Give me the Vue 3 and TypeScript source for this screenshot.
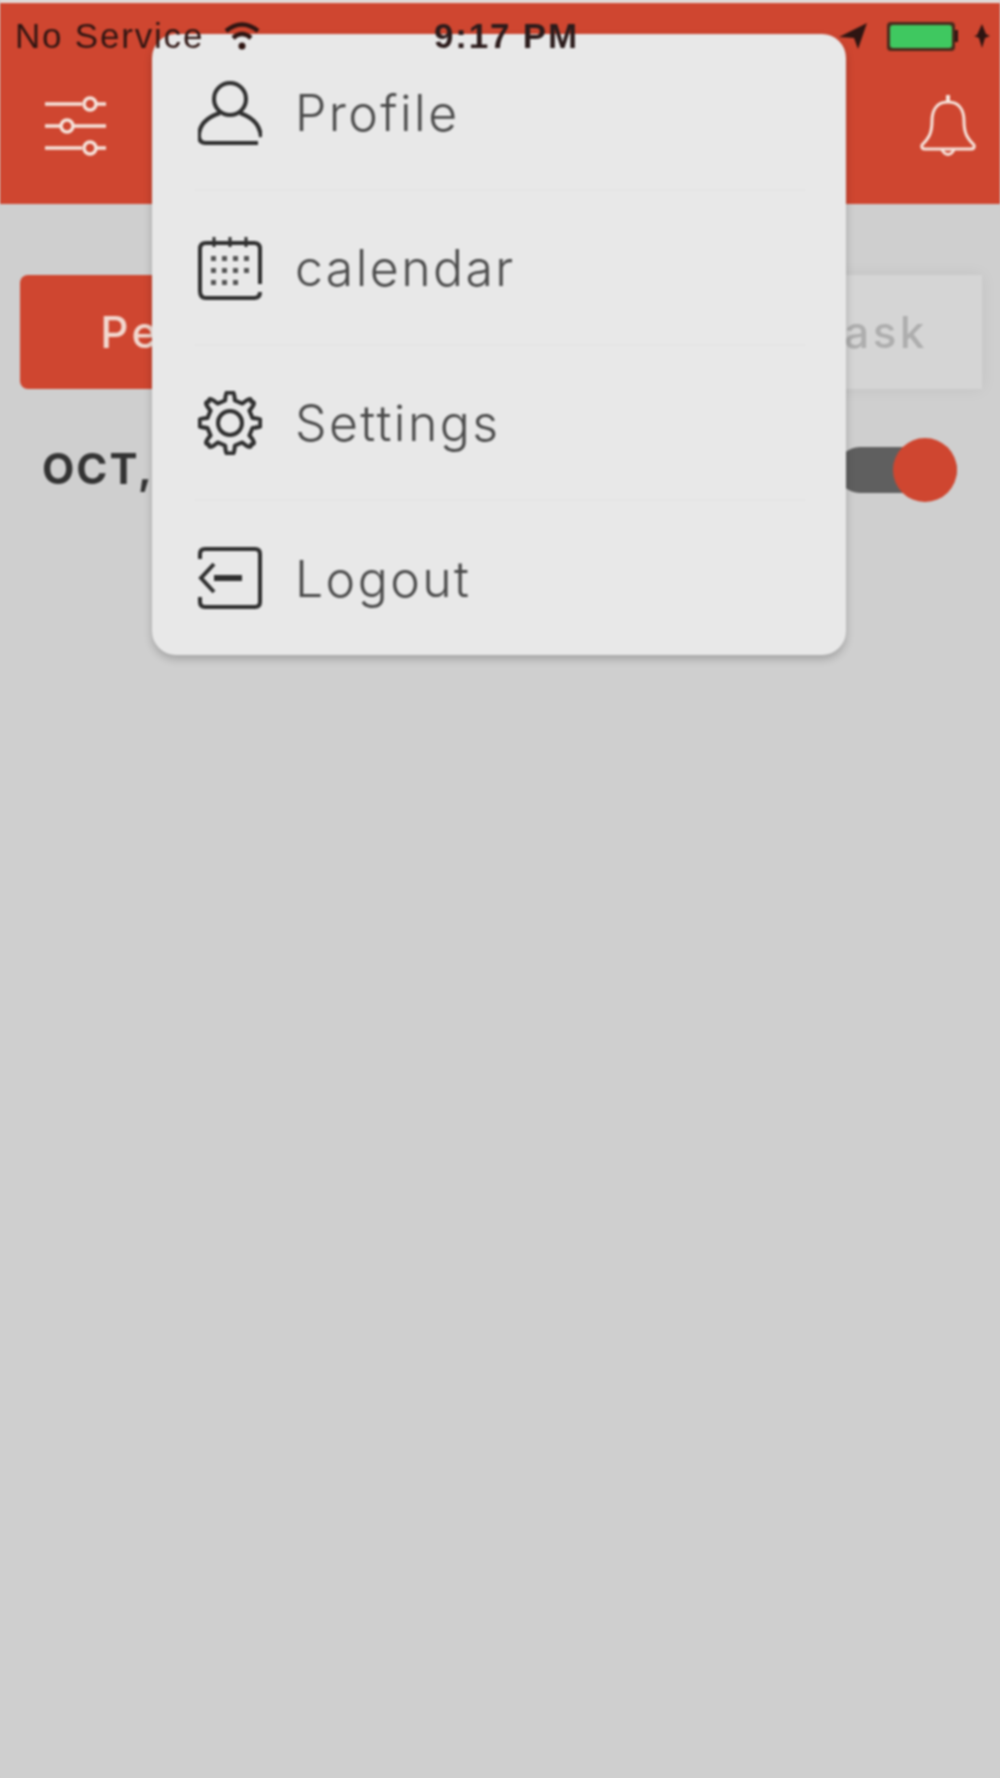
<template>
  <div class="screen">
    <header class="top">
      <div class="status-bar">
        <div class="status-left">
          <span>No Service</span>
          <svg class="wifi" viewBox="0 0 36 30" fill="none" stroke="#2e1512" stroke-width="4.5">
            <path d="M2 10 Q18 -3 34 10" />
            <path d="M9 17 Q18 9 27 17" />
            <circle cx="18" cy="25" r="3.5" fill="#2e1512" stroke="none" />
          </svg>
        </div>
        <span class="clock">9:17 PM</span>
        <div class="status-right">
          <svg class="arrow" viewBox="0 0 28 26"><path d="M0 14 L28 0 L19 26 L15 15 Z" fill="#2e1512" /></svg>
          <div class="battery"><div class="battery-fill"></div></div>
          <div class="battery-tip"></div>
          <svg class="bolt" viewBox="0 0 16 24"><path d="M8 0 L3 11 L0 12 L5 14 L8 24 L11 14 L16 12 L12 10 Z" fill="#2e1512" /></svg>
        </div>
      </div>
      <div class="nav">
        <svg class="sliders" viewBox="0 0 64 68" fill="none" stroke="#f6e4dc" stroke-width="3.5">
          <path d="M1 12 H38 M53 12 H62" />
          <circle cx="46" cy="12" r="6" />
          <path d="M1 34 H16 M30 34 H62" />
          <circle cx="23" cy="34" r="6" />
          <path d="M1 56 H38 M53 56 H62" />
          <circle cx="46" cy="56" r="6" />
        </svg>
        <svg class="bell" viewBox="0 0 56 66" fill="none" stroke="#f6e4dc" stroke-width="3">
          <path d="M28 9 C16 9 12 18 12 28 C12 40 9 45 2 52 Q1 56 5 56 H51 Q55 56 54 52 C47 45 44 40 44 28 C44 18 40 9 28 9 Z" />
          <path d="M28 2 V9" stroke-width="4" />
          <path d="M22 57 Q28 66 34 57" />
        </svg>
      </div>
    </header>

    <div class="tabs">
      <div class="tab active">Personal Task</div>
      <div class="tab">Business Task</div>
    </div>

    <div class="date-row">
      <span class="date">OCT, 2018</span>
      <div class="toggle">
        <div class="toggle-track"></div>
        <div class="toggle-knob"></div>
      </div>
    </div>

    <nav class="menu">
      <div v-for="item in items" :key="item.label" class="menu-item">
        <svg v-if="item.icon === 'profile'" class="menu-icon" viewBox="0 0 64 64" fill="none" stroke="#2f2f2f" stroke-width="4">
          <circle cx="32" cy="18" r="16" />
          <path d="M22 32 C10 36 1 43 1 55 Q1 62 8 62 H60 M63 56 C62 44 54 36 42 32" />
        </svg>
        <svg v-else-if="item.icon === 'calendar'" class="menu-icon" viewBox="0 0 64 64" fill="none" stroke="#2f2f2f" stroke-width="4">
          <path d="M14 7 H8 Q2 7 2 13 V55 Q2 62 8 62 H56 Q62 62 62 56 M62 48 V13 Q62 7 56 7 H14" />
          <path d="M16 1 V11 M32 1 V11 M48 1 V11" stroke-width="3" />
          <g v-for="dot in calendarDots" :key="dot.x + '-' + dot.y">
            <rect :x="dot.x" :y="dot.y" width="5" height="5" fill="#555" stroke="none" />
          </g>
        </svg>
        <svg v-else-if="item.icon === 'settings'" class="menu-icon" viewBox="0 0 64 64" fill="none" stroke="#2f2f2f" stroke-width="4">
          <path :d="gearPath" stroke-linejoin="round" />
          <circle cx="32" cy="32" r="12" />
        </svg>
        <svg v-else class="menu-icon" viewBox="0 0 64 64" fill="none" stroke="#2f2f2f" stroke-width="4">
          <path d="M2 12 V7 Q2 2 7 2 H57 Q62 2 62 7 V55 Q62 60 57 60 H7 Q2 60 2 55 V50" />
          <path d="M16 17 L3 31 L16 45" />
          <path d="M16 31 H44" stroke-width="6" />
        </svg>
        <span class="menu-label">{{ item.label }}</span>
      </div>
    </nav>
  </div>
</template>

<script setup lang="ts">
const items = [
  { label: 'Profile', icon: 'profile' },
  { label: 'calendar', icon: 'calendar' },
  { label: 'Settings', icon: 'settings' },
  { label: 'Logout', icon: 'logout' },
];

const calendarDots: { x: number; y: number }[] = [];
for (let row = 0; row < 3; row++) {
  for (let col = 0; col < 4; col++) {
    if (row === 2 && col === 3) continue;
    calendarDots.push({ x: 13 + col * 11, y: 20 + row * 12 });
  }
}

// eight rounded teeth, walked round the circle as polar points
function buildGear(): string {
  const teeth = 8;
  const pts: string[] = [];
  for (let i = 0; i < teeth; i++) {
    const a = (i / teeth) * Math.PI * 2 - Math.PI / 2;
    const step = Math.PI / teeth;
    const p = (r: number, t: number) =>
      `${(32 + r * Math.cos(t)).toFixed(1)} ${(32 + r * Math.sin(t)).toFixed(1)}`;
    pts.push(`${i === 0 ? 'M' : 'L'}${p(23, a - step * 0.55)}`);
    pts.push(`Q${p(35, a - step * 0.3)} ${p(30, a)}`);
    pts.push(`Q${p(35, a + step * 0.3)} ${p(23, a + step * 0.55)}`);
  }
  return pts.join(' ') + ' Z';
}

const gearPath = buildGear();
</script>

<style>
html,
body {
  background: #cfcfcf;
}
</style>

<style scoped>
.screen {
  position: relative;
  height: 1778px;
  overflow: hidden;
  background: #cfcfcf;
  font-family: Inter, "Liberation Sans", sans-serif;
  filter: blur(1px);
}

.top {
  height: 204px;
  box-sizing: border-box;
  border-top: 3px solid #e6dfdc;
  background: #cf4630;
}

/* the phone's status bar stays on top of the open menu */
.status-bar {
  position: relative;
  z-index: 2;
  display: grid;
  grid-template-columns: 1fr auto 1fr;
  align-items: center;
  height: 66px;
  padding: 0 10px 0 15px;
  font-family: "Liberation Sans", sans-serif;
  font-size: 35px;
  letter-spacing: 1.8px;
  color: #2e1512;
}

.status-left {
  display: flex;
  align-items: center;
  gap: 20px;
}

.wifi {
  width: 36px;
  height: 30px;
}

.clock {
  margin-left: 8px;
  font-weight: 700;
  color: #2b1b1b;
}

.status-right {
  display: flex;
  align-items: center;
  justify-content: flex-end;
}

.arrow {
  width: 28px;
  height: 26px;
  margin-right: 20px;
}

.battery {
  width: 68px;
  height: 29px;
  box-sizing: border-box;
  padding: 3px;
  border-radius: 4px;
  background: #4a2a1c;
}

.battery-fill {
  height: 100%;
  border-radius: 3px;
  background: #3fc860;
}

.battery-tip {
  width: 3px;
  height: 12px;
  margin-right: 16px;
  background: #2e1512;
}

.bolt {
  width: 16px;
  height: 24px;
}

.nav {
  display: flex;
  align-items: center;
  justify-content: space-between;
  padding: 23px 24px 0 44px;
}

.sliders {
  width: 64px;
  height: 68px;
}

.bell {
  width: 56px;
  height: 66px;
}

.tabs {
  display: grid;
  grid-template-columns: 500px 454px;
  justify-content: space-between;
  padding: 0 18px 0 20px;
  margin-top: 71px;
}

.tab {
  display: flex;
  align-items: center;
  justify-content: center;
  height: 114px;
  font-size: 44px;
  font-weight: 500;
  letter-spacing: 3.5px;
  color: #aeaeae;
  background: #d5d5d5;
  box-shadow: 0 0 16px rgba(0, 0, 0, 0.06);
}

.tab.active {
  border-radius: 8px;
  color: #f2d8cf;
  background: #cf4630;
  box-shadow: none;
}

.date-row {
  display: flex;
  align-items: center;
  justify-content: space-between;
  padding: 0 43px 0 42px;
  margin-top: 49px;
}

.date {
  margin-bottom: 3px;
  font-size: 42px;
  font-weight: 700;
  letter-spacing: 2px;
  color: #333;
}

.toggle {
  position: relative;
  width: 120px;
  height: 64px;
}

.toggle-track {
  position: absolute;
  top: 9px;
  left: 0;
  width: 100%;
  height: 46px;
  border-radius: 23px;
  background: #5f5f5f;
}

.toggle-knob {
  position: absolute;
  top: 0;
  right: 0;
  width: 64px;
  height: 64px;
  border-radius: 50%;
  background: #cf4630;
}

.menu {
  position: absolute;
  z-index: 1;
  top: 34px;
  left: 152px;
  width: 694px;
  height: 621px;
  box-sizing: border-box;
  padding-top: 2px;
  border-radius: 24px;
  background: #e8e8e8;
  box-shadow: 0 4px 8px rgba(0, 0, 0, 0.22);
}

.menu-item {
  display: flex;
  align-items: center;
  gap: 33px;
  height: 155px;
  box-sizing: border-box;
  margin: 0 41px 0 43px;
  padding-left: 3px;
  border-bottom: 2px solid #e4e4e4;
}

.menu-item:last-child {
  border-bottom: none;
}

.menu-icon {
  flex: none;
  width: 64px;
  height: 64px;
}

.menu-label {
  font-size: 50px;
  font-weight: 300;
  letter-spacing: 2.4px;
  color: #4a4a4a;
}
</style>
